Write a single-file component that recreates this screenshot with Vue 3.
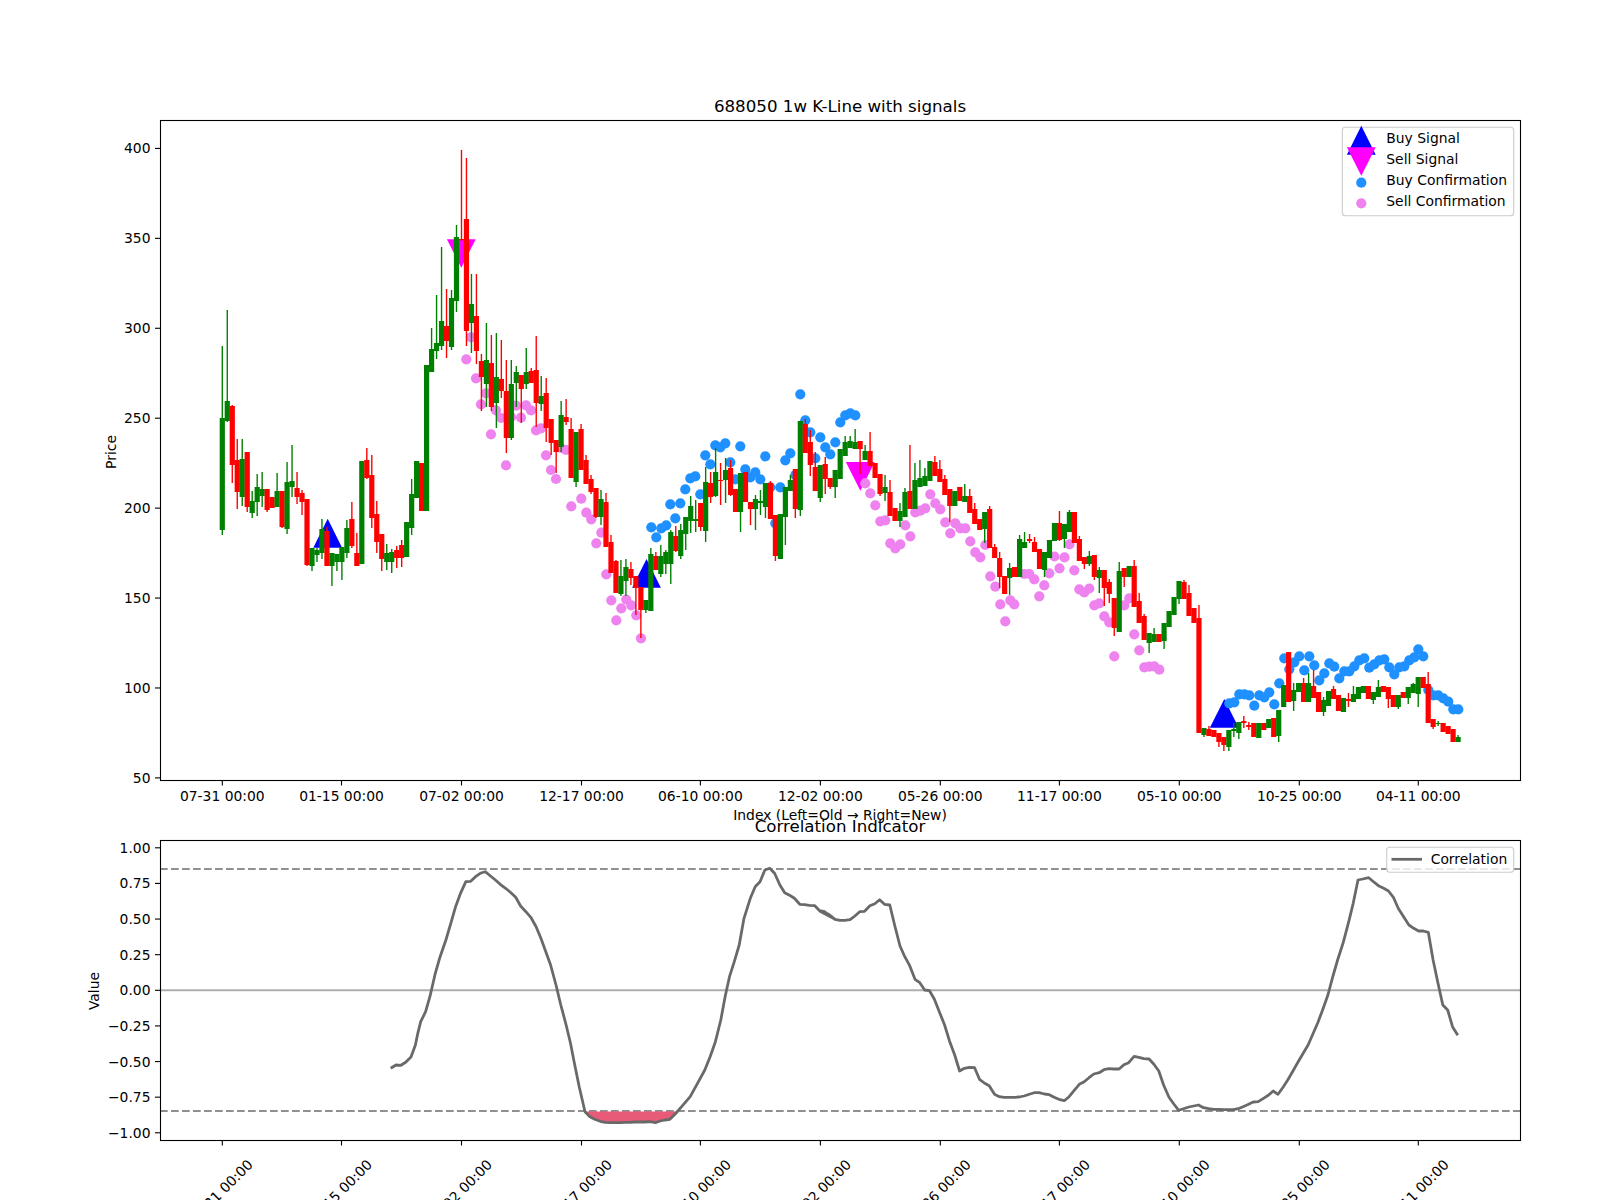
<script setup>
const candleSrc = `g346,418,530,535 g310,401,421,422 r405,406,465,483 r439,460,492,509 g439,459,497,506 r452,452,507,512 g491,501,513,518 g474,487,502,516 g472,489,496,507 r489,489,510,512
r497,497,508,508 g473,491,507,507 r491,491,527,528 g462,482,529,534 g445,481,487,497 r472,488,497,504 r490,493,502,515 r499,499,565,566 g548,548,566,571 g548,550,555,562
g519,529,553,559 r527,531,566,566 g553,553,566,586 g554,554,562,571 g547,547,562,580 g520,528,553,558 r502,519,546,548 r533,553,566,566 g461,461,564,564 r448,460,478,479
r455,475,518,528 r501,514,542,553 r534,534,559,571 g544,553,562,570 g549,552,562,573 r546,550,558,568 r540,545,558,567 g522,522,557,557 g479,494,528,535 g461,461,498,498
r463,463,511,511 g365,365,511,511 g328,349,372,372 g295,343,351,359 g247,321,346,350 r289,326,341,358 g290,298,347,350 g225,237,301,312 r150,239,240,241 r158,219,331,346
g274,304,323,353 r274,316,351,364 r354,361,377,411 g323,360,384,407 r335,363,407,411 g333,377,403,428 r340,379,391,398 r360,391,438,453 g360,384,438,440 g366,372,383,407
r375,375,389,423 g348,372,384,389 r368,371,383,383 r336,370,403,427 g376,396,404,411 r378,393,428,442 r419,419,443,455 r440,440,452,473 g401,415,447,452 r399,417,422,425
r418,429,478,478 g432,432,482,487 r424,429,470,470 r455,460,484,484 r475,479,492,494 r488,488,517,518 g490,499,517,525 r493,502,547,547 r535,542,573,573 r560,561,593,593
g560,576,594,596 g559,567,581,596 r562,569,578,585 r576,576,588,615 r587,587,610,638 g600,600,610,613 g548,554,611,611 r552,556,570,570 g545,556,574,577 g550,552,564,574
g530,532,564,584 r526,536,551,552 g524,530,556,559 g517,517,534,550 g496,506,521,533 g500,519,521,532 r503,503,527,531 g467,482,531,542 r472,483,497,503 g448,472,496,497
r463,480,481,505 g458,470,480,503 r460,468,495,496 r489,489,512,512 g473,473,512,532 r472,472,502,502 r502,502,509,525 g495,499,509,530 g490,501,503,515 g483,483,507,518
r481,483,519,519 r515,515,556,561 g514,514,559,559 g487,487,517,545 g475,480,491,491 r469,469,509,518 g421,421,510,516 r419,424,453,453 r430,442,465,476 r452,467,491,491
g465,465,498,502 r457,464,479,494 r478,478,487,489 g470,470,487,498 g449,449,479,479 g436,442,456,456 g436,441,448,448 g429,442,449,449 r441,441,449,474 g445,451,460,460
r432,451,466,466 r463,463,478,478 r474,474,494,496 g475,487,493,501 r480,492,516,516 r508,508,521,521 g503,511,521,527 g488,492,517,517 r445,491,509,509 g463,480,509,509
g460,478,487,487 g468,476,486,486 g461,461,481,481 r456,462,476,476 r460,469,482,482 r475,479,495,495 r489,489,506,522 g491,491,506,506 r487,487,501,501 g484,496,502,502
r489,496,513,513 r503,509,524,524 r519,519,530,530 g512,512,529,543 r506,509,548,548 r544,547,558,558 r552,558,577,588 r576,576,594,594 g563,568,578,595 r567,567,577,577
g535,539,577,577 g532,542,548,548 r534,539,541,543 r537,542,552,552 r549,549,569,569 g552,552,570,577 g540,540,558,558 g523,523,541,541 r511,523,540,541 g524,524,539,548
g510,512,532,532 r512,512,543,543 r536,539,561,561 r557,557,564,569 g551,556,564,566 r555,555,577,580 g567,570,578,593 r570,570,588,606 r579,582,594,603 r598,598,628,636
g562,571,632,632 r568,568,577,587 g566,566,577,577 r560,566,607,607 r593,601,623,623 r614,616,640,640 g633,633,643,653 g628,634,642,642 r634,634,642,642 g623,623,641,649
g611,611,627,627 g597,597,615,615 g581,581,599,604 r580,582,599,599 r585,593,616,616 r608,608,623,623 r605,618,733,733 g728,728,735,737 r726,729,736,736 r730,730,737,737
r733,733,742,747 r737,737,745,751 g730,730,747,751 g723,729,731,737 g722,722,733,739 r716,721,723,728 r722,725,727,730 r723,723,737,737 g723,723,738,738 r723,723,730,730
g719,719,728,728 r718,718,737,737 g710,710,736,742 g685,685,707,707 r652,652,702,702 g683,690,701,711 g683,683,692,692 r678,683,702,702 g673,683,702,702 r670,686,698,698
r692,692,712,712 g697,700,712,716 g691,691,706,706 r686,689,699,699 r695,695,711,711 g698,698,712,712 r693,699,701,707 g686,694,702,702 g687,687,699,699 g686,686,693,693
r686,686,699,699 g692,692,700,704 g680,687,697,697 r686,686,692,692 r687,687,699,708 r695,695,707,707 g695,695,707,709 r692,692,698,698 g687,687,698,704 g683,684,693,693
g677,677,694,707 r677,677,688,688 r672,684,723,723 r719,719,727,729 g721,723,724,726 r723,723,732,732 r726,726,734,734 r729,729,742,742 g735,737,742,742`

const candles = candleSrc.trim().split(/\s+/).map((s, i) => {
  const [wt, bt, bb, wb] = s.slice(1).split(',').map(Number)
  return { cls: s[0] === 'g' ? 'up' : 'down', x: 222.3 + 4.983 * i, wt, bt, bb, wb }
})

const pairs = (s) => s.trim().split(/\s+/).map((p) => p.split(',').map(Number))

const pinkDots = pairs(`466.3,359.3 471,337.3 476,378.3 481,404.3 486,393.3 491,434.3 496,410.3 501,418 506,465.3 511,417 516,405.7 521,417.7 526,405.3 531,410.3 536,430.3 541,428.3 546,455.3 551,470 556,479 561,448 566,450
571.3,506.3 581.3,498.7 586.3,512.7 591.3,519.3 601.3,532.7 596.3,543.3 606.3,574.3 611.3,600.3 616.3,620.3 621.3,608.3 626.3,599.5 631.3,605.3 636.3,615.3 641,638.3
865.3,483.3 870.3,493.3 875.3,505.3 880.3,521.3 885.3,520.3 890.3,543.3 895.3,548.3 900.3,544.3 905.3,525.3 910.3,536.3 915.3,512.3 920.3,510.7 925.3,508.3 930.3,494.3 935.3,503.3 940.3,509.3 945.3,522.3 950.3,533.3 955.3,523.3 960.3,528.3 965.3,528.3 970.3,541.3 975.3,552.3 980.3,557.3 985.3,545 990.3,576.3 995.3,586.7 1000.3,604.3 1005.3,621.3 1010.3,600.3 1014.3,604.3 1024.3,574 1029.3,574 1034.3,579.3 1039.3,596.3 1044.3,585.3 1049.3,573.3
1054.5,556.5 1059.5,568.3 1064.5,557.3 1069.5,544.3 1074.3,570.3 1079.3,589.3 1084.3,592.5 1089.3,588.5 1094.3,605.3 1099.3,603.3 1104.3,616.3 1109.3,622.3 1114.3,656.3 1124.3,605.3 1129.3,598.3 1134.3,634.3 1139.3,650.3 1144.3,667.3 1149.3,666.7 1154.3,666.3 1159.3,669.7`)

const blueDots = pairs(`651.3,527.3 656.3,537.3 661.3,528.3 666.3,525.3 670.3,504.3 675.3,518.3 680.3,503.3 685.3,489.3 690.3,478.3 695.3,476.3 700.3,494.3 705.3,455.3 710.3,464.3 715.3,445.3 720.3,447.3 725.3,443.3 730.3,462.3 735.3,479.3 740.3,446.3 745.3,469.3 750.3,477.3 755.3,472.3 760.3,479.3 765.3,456.3 770.3,487.3 775.3,523.3 780.3,487.3 785.3,460.3 790.3,453.3 795.3,475 800.3,394.3 805.3,420.3 810.3,432.3 815.3,458.3 820.3,437.3 825.3,447.3 830.3,454.3 835.3,442.3 840.3,422.3 845.3,415.3 850.3,413.3 855.3,415.3
1229.3,703.3 1234.3,702.3 1239.3,694.3 1244.3,694.3 1249.3,695.3 1254.3,705.7 1259.3,695.3 1264.3,697.3 1269.3,692.3 1274.3,704.3 1279.3,683.3 1284.3,658.3 1289.3,669.3 1294.3,662.3 1299.3,656.3 1304.3,670.3 1309.3,656.3 1314.3,665.3 1319.3,680.3 1324.3,673.3 1329.3,663.3 1334.3,666.7 1339.3,678.3 1344.3,671.3 1349.3,671.3 1354.3,666.3 1359.3,660.3 1364.3,658.3 1369.3,667.7 1374.3,664.3 1379.3,660.3 1384.3,659.3 1389.3,667.3 1394.3,674.3 1399.3,667.3 1404.3,666.3 1409.3,660.3 1414.3,657.3 1418.3,649.3 1423.3,656.3 1428.3,690 1433.3,695.3 1438.3,695.3 1443.3,698.3 1448.3,701.7 1453.3,709.3 1458.3,709.3`)

const triUp = (cx, tip, base) => `${cx},${tip} ${cx - 14.4},${base} ${cx + 14.4},${base}`
const triDown = (cx, base, tip) => `${cx},${tip} ${cx - 14.4},${base} ${cx + 14.4},${base}`

const buyMarks = [triUp(327.7, 518.7, 547.7), triUp(646.5, 559, 587.7), triUp(1224.3, 699, 727.7)]
const sellMarks = [triDown(461.3, 239.3, 267.7), triDown(860.3, 462, 490.7)]
const legendBuy = triUp(1361.3, 125.7, 154.7)
const legendSell = triDown(1361.3, 147.3, 175.7)

const xTicks = [
  ['07-31 00:00', 222.3], ['01-15 00:00', 341.5], ['07-02 00:00', 461.5], ['12-17 00:00', 581.5],
  ['06-10 00:00', 700.4], ['12-02 00:00', 820.4], ['05-26 00:00', 940.3], ['11-17 00:00', 1059.4],
  ['05-10 00:00', 1179.3], ['10-25 00:00', 1299.3], ['04-11 00:00', 1418.3]
].map(([label, x]) => ({ label, x }))

const priceTicks = [400, 350, 300, 250, 200, 150, 100, 50].map((v) => ({
  label: String(v), y: 777.9 - (v - 50) * 1.7985
}))

const valueTicks = [
  ['1.00', 1], ['0.75', 0.75], ['0.50', 0.5], ['0.25', 0.25], ['0.00', 0],
  ['\u22120.25', -0.25], ['\u22120.50', -0.5], ['\u22120.75', -0.75], ['\u22121.00', -1]
].map(([label, v]) => ({ label, y: 990.3 - v * 142.5 }))

const z6 = `641,745 652,735 662,736 672,727 683,711 692,675 697,640 703,605 713,575 722,530 733,460 743,410 755,360 765,310 775,260 785,220 796,185 806,184 816,170 826,160 836,155 847,168 857,180 867,193 878,205 888,217 899,232 909,258 920,275 930,292 941,320 951,355 961,395 971,435 982,495 992,555 1002,610 1012,670 1020,730 1030,800 1042,875 1052,890 1062,898 1073,904 1083,907 1094,908 1104,908 1115,908 1125,907 1135,907 1145,906 1155,906 1166,906 1176,905 1187,908 1197,903 1207,900 1217,898 1228,882 1240,862 1259,830 1274,790 1289,750 1300,710 1311,665 1322,600 1331,530 1340,470 1350,425 1360,375 1370,295 1383,235 1393,200 1403,185 1413,150 1423,145 1433,160 1444,195 1454,218 1464,226 1474,235 1485,253 1495,254 1505,256 1516,257 1526,272 1536,275 1547,288 1557,297`
const z7 = `0,274 10,277 20,285 31,298 41,301 51,301 62,299 72,288 82,275 92,274 103,257 113,251 123,239 133,253 144,255 154,315 165,378 175,410 185,437 196,478 206,488 216,510 226,512 236,538 247,578 257,615 267,662 278,705 288,753 298,745 308,742 319,743 329,778 339,789 349,797 360,823 370,830 380,832 391,832 401,832 411,831 421,828 432,823 442,818 452,818 463,822 473,824 483,832 493,838 504,842 514,830 524,812 535,793 545,785 555,773 565,762 576,758 586,749 596,746 606,747 617,747 627,734 637,728 648,709 658,712 668,716 679,717 689,733 699,753 709,795 720,832 730,852 740,871 750,866 761,861 771,858 781,855 791,863 802,866 812,868 822,868 833,869 843,869 853,869 863,866 873,860 884,853 894,846 904,845 915,835 925,826 935,813 945,823 956,800 966,778 976,752 986,727 997,700 1007,675 1017,642 1027,608 1037,570 1048,525 1058,470 1068,420 1079,370 1090,310 1100,250 1110,180 1120,177 1132,173 1142,185 1152,197 1163,205 1173,213 1183,232 1193,265 1204,290 1215,315 1225,325 1235,333 1245,333 1255,337 1265,420 1275,490 1285,555 1295,570 1305,620 1316,646`

const sx = 2.0632
const left = pairs(z6).map(([a, b]) => [80 + a / sx, 820 + b / 3])
const right = pairs(z7).map(([a, b]) => [820 + a / sx, 820 + b / 3])
const corr = [...left, ...right]
const fmt = (pts) => pts.map(([a, b]) => `${a.toFixed(1)},${b.toFixed(1)}`).join(' ')
const corrLine = fmt(corr)
const fillPts = fmt([[585.2, 1111.6], ...left.filter(([x]) => x > 585.5 && x < 677), [677, 1111.6]])
</script>

<template>
  <div class="page">
    <svg class="figure" width="1600" height="1200" viewBox="0 0 1600 1200">
      <!-- price panel -->
      <polygon v-for="(p, i) in buyMarks" :key="'b' + i" :points="p" class="buy" />
      <polygon v-for="(p, i) in sellMarks" :key="'s' + i" :points="p" class="sell" />
      <circle v-for="(d, i) in pinkDots" :key="'p' + i" :cx="d[0]" :cy="d[1]" r="5.1" class="pink" />
      <circle v-for="(d, i) in blueDots" :key="'d' + i" :cx="d[0]" :cy="d[1]" r="5.1" class="blue" />
      <g v-for="(c, i) in candles" :key="'c' + i" :class="c.cls">
        <line :x1="c.x" :x2="c.x" :y1="c.wt" :y2="c.wb" class="wick" />
        <rect :x="c.x - 2.6" :y="c.bt" width="5.2" :height="Math.max(c.bb - c.bt, 1)" class="body" />
      </g>
      <rect x="160.5" y="120.5" width="1360" height="660" class="frame" />

      <g v-for="t in priceTicks" :key="'pt' + t.label">
        <line x1="155" x2="160" :y1="t.y" :y2="t.y" class="tick" />
        <text x="150.5" :y="t.y + 5" class="label end">{{ t.label }}</text>
      </g>
      <g v-for="t in xTicks" :key="'xt' + t.label">
        <line :x1="t.x" :x2="t.x" y1="780.5" y2="785.5" class="tick" />
        <text :x="t.x" y="801" class="label mid">{{ t.label }}</text>
      </g>
      <text x="840" y="112" class="title mid">688050 1w K-Line with signals</text>
      <text class="label mid" transform="translate(116 452) rotate(-90)">Price</text>
      <text x="840" y="820" class="label mid">Index (Left=Old → Right=New)</text>

      <rect x="1342.3" y="127.3" width="171.4" height="88.4" rx="3" class="legend" />
      <polygon :points="legendBuy" class="buy" />
      <polygon :points="legendSell" class="sell" />
      <circle cx="1361.3" cy="182.7" r="5.1" class="blue" />
      <circle cx="1361.3" cy="203.3" r="5.1" class="pink" />
      <text x="1386.3" y="143.3" class="label">Buy Signal</text>
      <text x="1386.3" y="164.3" class="label">Sell Signal</text>
      <text x="1386.3" y="185.3" class="label">Buy Confirmation</text>
      <text x="1386.3" y="206.2" class="label">Sell Confirmation</text>

      <!-- correlation panel -->
      <line x1="160" x2="1520" y1="990.3" y2="990.3" class="zero" />
      <line x1="160" x2="1520" y1="869" y2="869" class="dash" />
      <line x1="160" x2="1520" y1="1111" y2="1111" class="dash" />
      <polygon :points="fillPts" class="band" />
      <polyline :points="corrLine" class="corr" />
      <rect x="160.5" y="840.5" width="1360" height="300" class="frame" />

      <g v-for="t in valueTicks" :key="'vt' + t.label">
        <line x1="155" x2="160" :y1="t.y" :y2="t.y" class="tick" />
        <text x="150.5" :y="t.y + 5" class="label end">{{ t.label }}</text>
      </g>
      <g v-for="t in xTicks" :key="'xb' + t.label">
        <line :x1="t.x" :x2="t.x" y1="1140.5" y2="1145.5" class="tick" />
        <text :x="t.x - 2" y="1197" class="label mid" :transform="`rotate(-45 ${t.x - 2} 1192)`">{{ t.label }}</text>
      </g>
      <text x="840" y="832" class="title mid">Correlation Indicator</text>
      <text class="label mid" transform="translate(99 991) rotate(-90)">Value</text>

      <rect x="1386.7" y="847.3" width="127" height="25" rx="3" class="legend" />
      <line x1="1391.5" x2="1422" y1="859.3" y2="859.3" class="corr" />
      <text x="1430.7" y="864.3" class="label">Correlation</text>
    </svg>
  </div>
</template>

<style scoped>
.page {
  width: 1600px;
  height: 1200px;
  overflow: hidden;
  background: #ffffff;
}
.figure {
  display: block;
}
.up {
  fill: #008000;
  stroke: #008000;
}
.down {
  fill: #ff0000;
  stroke: #ff0000;
}
.wick {
  stroke-width: 1.39;
}
.body {
  stroke: none;
}
.buy {
  fill: #0000ff;
}
.sell {
  fill: #ff00ff;
}
.pink {
  fill: #ee82ee;
}
.blue {
  fill: #1e90ff;
}
.frame {
  fill: none;
  stroke: #000000;
  stroke-width: 1.1;
}
.tick {
  stroke: #000000;
  stroke-width: 1.1;
}
.label {
  font-family: "DejaVu Sans", sans-serif;
  font-size: 13.89px;
  fill: #000000;
}
.title {
  font-family: "DejaVu Sans", sans-serif;
  font-size: 16.67px;
  fill: #000000;
}
.mid {
  text-anchor: middle;
}
.end {
  text-anchor: end;
}
.legend {
  fill: rgba(255, 255, 255, 0.8);
  stroke: #cccccc;
  stroke-width: 1.1;
}
.zero {
  stroke: #aeaeae;
  stroke-width: 2;
}
.dash {
  stroke: #8f8f8f;
  stroke-width: 2.08;
  stroke-dasharray: 7.7 3.3;
}
.band {
  fill: #e75a78;
}
.corr {
  fill: none;
  stroke: #696969;
  stroke-width: 2.78;
  stroke-linejoin: round;
}
</style>
